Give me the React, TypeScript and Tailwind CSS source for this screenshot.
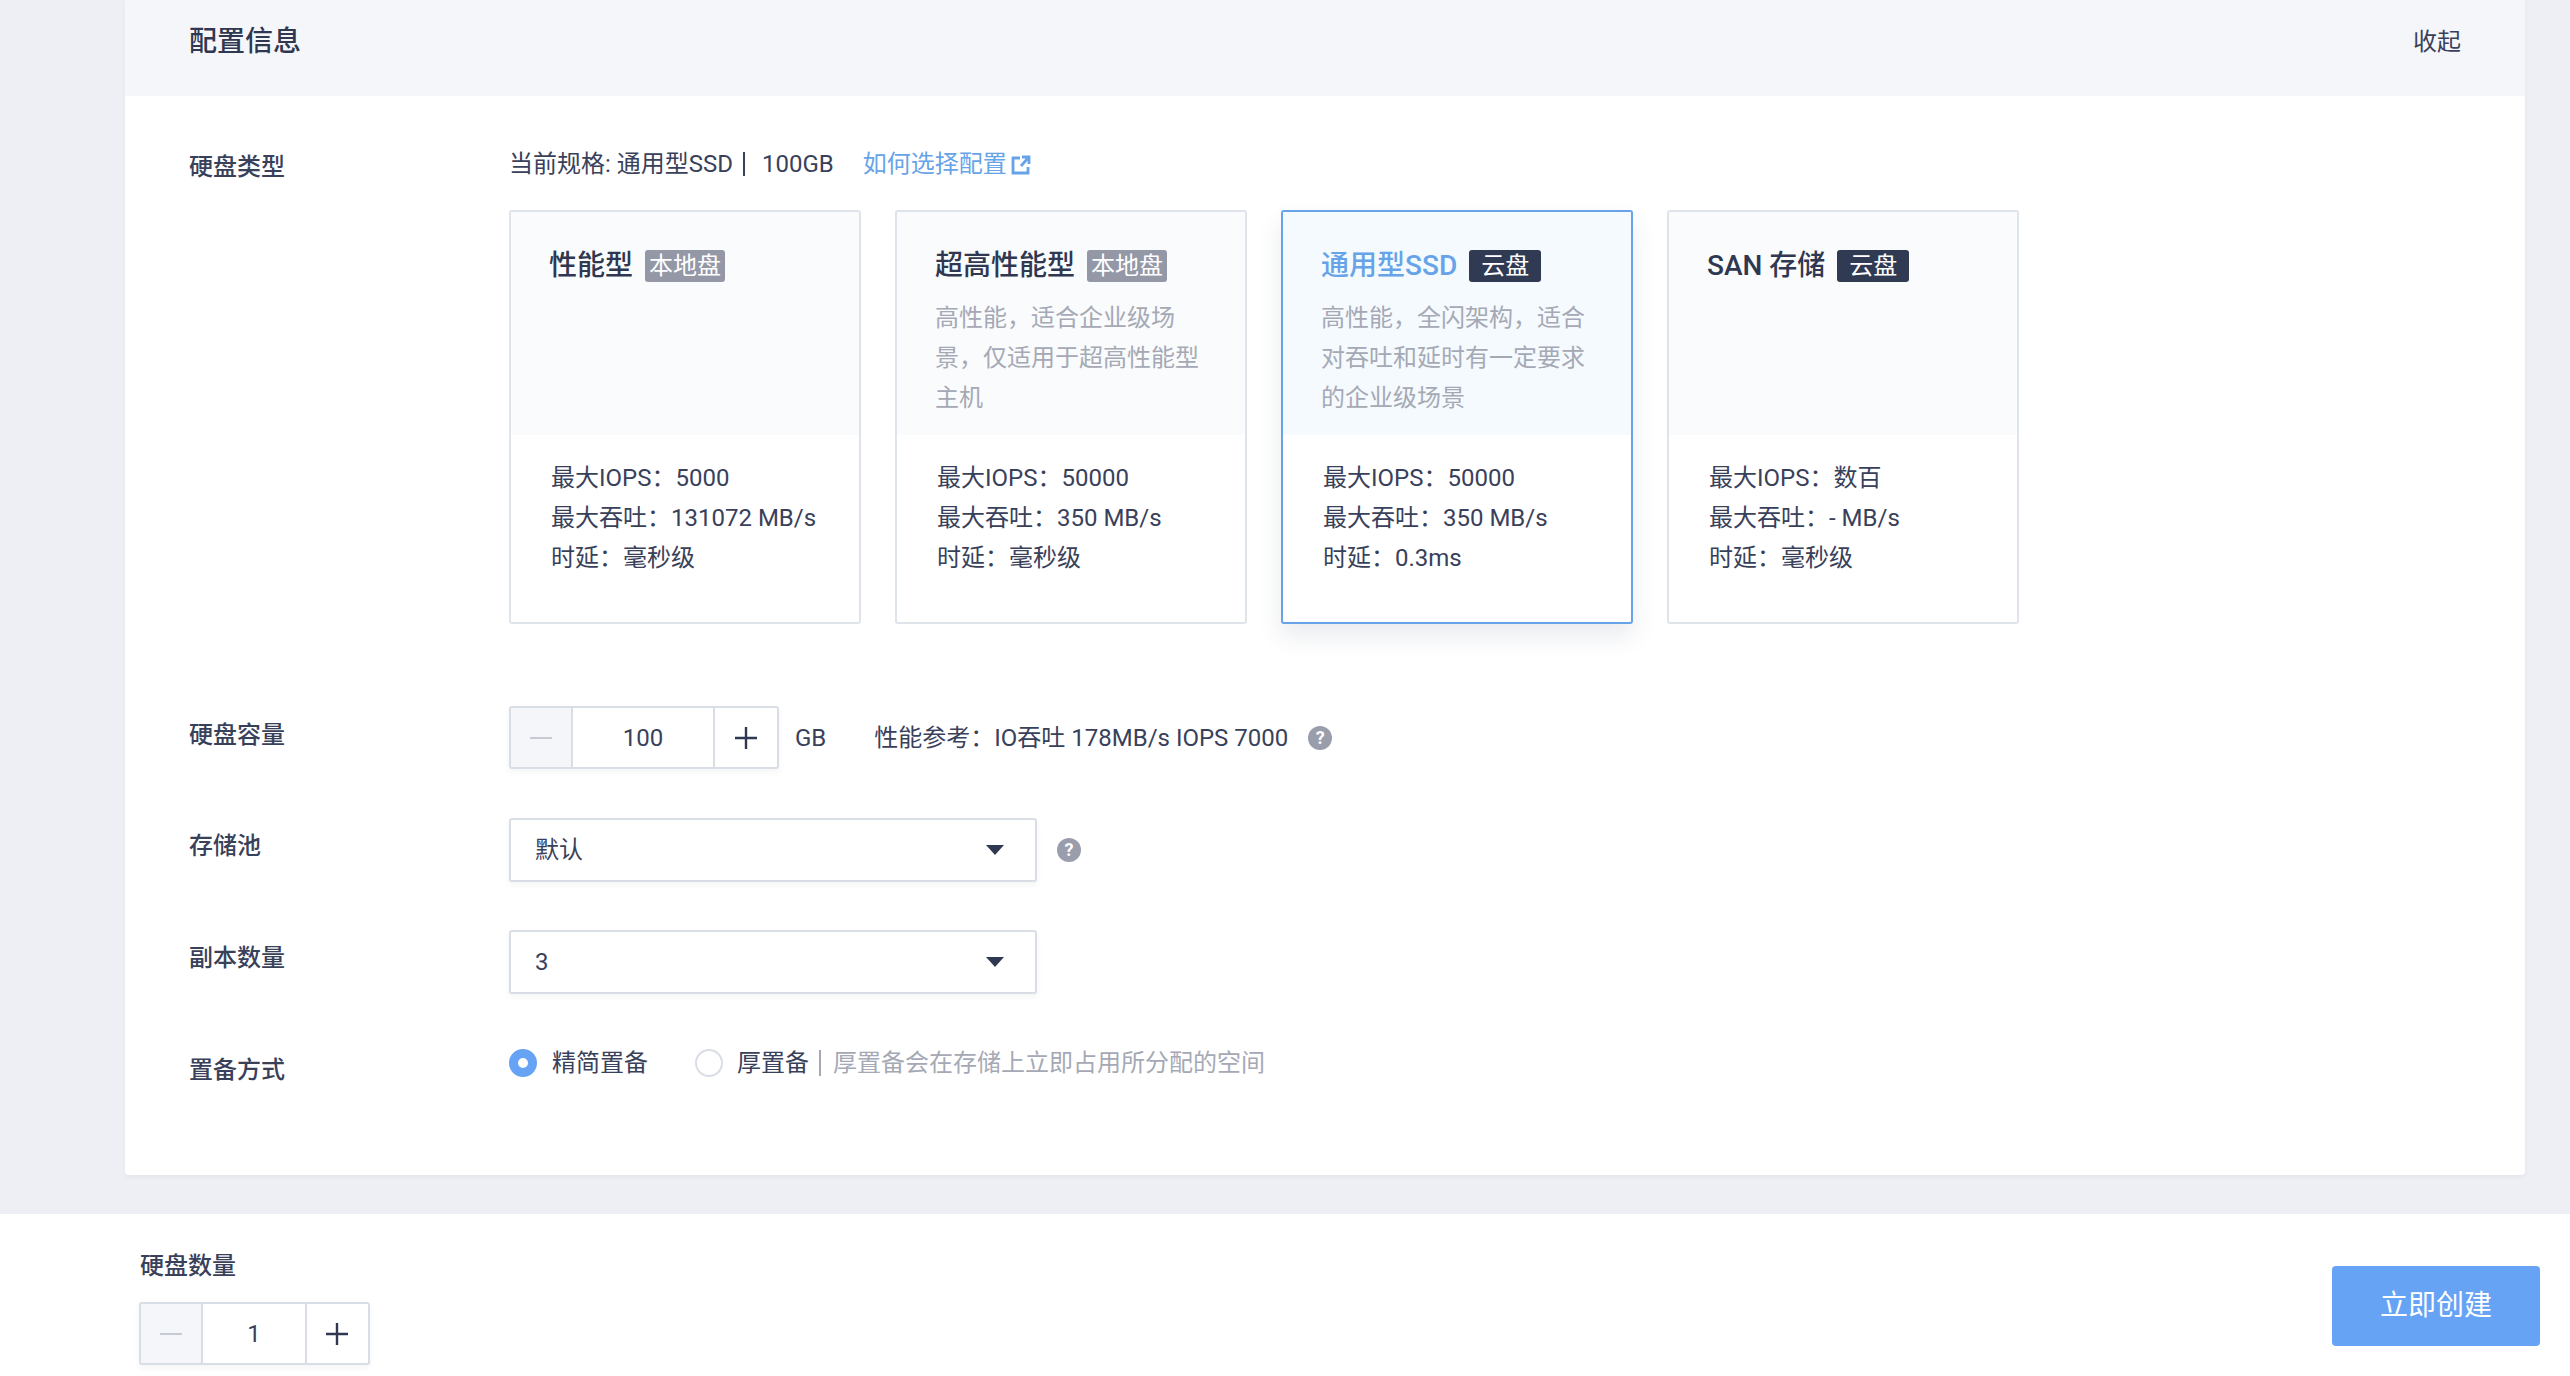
import React from "react";

const cards = [
  {
    title: "性能型",
    badge: "本地盘",
    dark: false,
    active: false,
    desc: [],
    stats: ["最大IOPS：5000", "最大吞吐：131072 MB/s", "时延：毫秒级"],
  },
  {
    title: "超高性能型",
    badge: "本地盘",
    dark: false,
    active: false,
    desc: ["高性能，适合企业级场", "景，仅适用于超高性能型", "主机"],
    stats: ["最大IOPS：50000", "最大吞吐：350 MB/s", "时延：毫秒级"],
  },
  {
    title: "通用型SSD",
    badge: "云盘",
    dark: true,
    active: true,
    desc: ["高性能，全闪架构，适合", "对吞吐和延时有一定要求", "的企业级场景"],
    stats: ["最大IOPS：50000", "最大吞吐：350 MB/s", "时延：0.3ms"],
  },
  {
    title: "SAN 存储",
    badge: "云盘",
    dark: true,
    active: false,
    desc: [],
    stats: ["最大IOPS：数百", "最大吞吐：- MB/s", "时延：毫秒级"],
  },
];

function Stepper({ value, inputWidth, plusWidth }: { value: string; inputWidth: string; plusWidth: string }) {
  return (
    <div className="flex h-[63px] rounded-[3px] border-2 border-[#d8dde6] bg-white shadow-[0_3px_6px_rgba(40,50,80,0.05)]">
      <div className="flex w-[62px] items-center justify-center border-r-2 border-[#d8dde6] bg-[#f5f6fa]">
        <div className="h-[2px] w-[22px] bg-[#c6cad3]" />
      </div>
      <div className={`flex items-center justify-center text-[24px] text-[#39415a] ${inputWidth}`}>{value}</div>
      <div className={`flex items-center justify-center border-l-2 border-[#d8dde6] ${plusWidth}`}>
        <svg width="24" height="24" viewBox="0 0 24 24" fill="none" stroke="#2f3850" strokeWidth="2.4">
          <path d="M12 1v22M1 12h22" />
        </svg>
      </div>
    </div>
  );
}

function Help() {
  return (
    <span className="flex h-[24px] w-[24px] items-center justify-center rounded-full bg-[#9a9eac] text-[18px] font-bold leading-none text-white">
      ?
    </span>
  );
}

function Select({ value }: { value: string }) {
  return (
    <div className="flex h-[64px] w-[528px] items-center justify-between rounded-[3px] border-2 border-[#d8dde6] bg-white pl-[24px] pr-[31px] text-[24px] text-[#39415a] shadow-[0_3px_6px_rgba(40,50,80,0.05)]">
      <span>{value}</span>
      <svg width="18" height="10" viewBox="0 0 18 10" fill="#2f3850">
        <path d="M0 0h18L9 10z" />
      </svg>
    </div>
  );
}

function Card({ card }: { card: (typeof cards)[number] }) {
  return (
    <div
      className={`h-[414px] w-[352px] rounded-[3px] border-2 bg-white ${
        card.active
          ? "border-[#66a3e8] shadow-[0_12px_24px_rgba(40,60,100,0.1)]"
          : "border-[#dfe3ea]"
      }`}
    >
      <div className={`h-[223px] pl-[38px] pr-[30px] pt-[38px] ${card.active ? "bg-[#f5fafe]" : "bg-[#f9fbfc]"}`}>
        <div className="flex h-[32px] items-center gap-[12px]">
          <span className={`text-[28px] font-medium ${card.active ? "text-[#66a3e8]" : "text-[#2f3850]"}`}>
            {card.title}
          </span>
          <span
            className={`flex h-[32px] items-center rounded-[3px] text-[24px] text-white ${
              card.dark ? "bg-[#303a52] px-[12px]" : "bg-[#9397a6] px-[4px]"
            }`}
          >
            {card.badge}
          </span>
        </div>
        <div className="mt-[16px] text-[24px] leading-[40px] whitespace-nowrap text-[#a5a9b5]">
          {card.desc.map((line) => (
            <div key={line}>{line}</div>
          ))}
        </div>
      </div>
      <div className="px-[40px] pt-[23px] text-[24px] leading-[40px] whitespace-nowrap text-[#39415a]">
        {card.stats.map((line) => (
          <div key={line}>{line}</div>
        ))}
      </div>
    </div>
  );
}

export default function App() {
  return (
    <div
      className="flex h-[1376px] w-[2570px] flex-col overflow-hidden bg-[#eeeff4] text-[#39415a]"
      style={{ fontFamily: 'Roboto, "Noto Sans CJK SC", sans-serif' }}
    >
      {/* Panel */}
      <div className="pl-[125px] pr-[45px]">
        <div className="h-[1175px] rounded-b-[4px] bg-white shadow-[0_2px_4px_rgba(40,50,80,0.05)]">
          <div className="flex h-[96px] items-start justify-between bg-[#f5f6fa] px-[64px] pt-[21px]">
            <span className="text-[28px] font-medium leading-[42px] text-[#2f3850]">配置信息</span>
            <span className="text-[24px] leading-[42px] text-[#39415a]">收起</span>
          </div>

          <div className="pl-[64px] pt-[48px]">
            <div className="flex">
              <div className="w-[320px] pt-[3px] text-[24px] font-medium leading-[40px] text-[#39415a]">硬盘类型</div>
              <div>
                <div className="flex h-[40px] items-center text-[24px]">
                  <span>当前规格: 通用型SSD</span>
                  <span className="ml-[10px] h-[24px] w-[2px] bg-[#39415a]" />
                  <span className="ml-[17px]">100GB</span>
                  <span className="ml-[29px] text-[#66a3e8]">如何选择配置</span>
                  <svg className="ml-[4px] mt-[2px]" width="20" height="20" viewBox="0 0 20 20" fill="none" stroke="#66a3e8" strokeWidth="2.8">
                    <path d="M9 3H2v15h15v-6M10 11l7-8M11 2h7v7" />
                  </svg>
                </div>
                <div className="mt-[26px] flex gap-[34px]">
                  {cards.map((card) => (
                    <Card key={card.title} card={card} />
                  ))}
                </div>
              </div>
            </div>

            <div className="mt-[82px] flex items-center">
              <div className="w-[320px] pb-[6px] text-[24px] font-medium text-[#39415a]">硬盘容量</div>
              <Stepper value="100" inputWidth="w-[140px]" plusWidth="w-[64px]" />
              <span className="ml-[16px] text-[24px]">GB</span>
              <span className="ml-[48px] text-[24px]">性能参考：IO吞吐 178MB/s IOPS 7000</span>
              <span className="ml-[20px]">
                <Help />
              </span>
            </div>

            <div className="mt-[49px] flex items-center">
              <div className="w-[320px] pb-[8px] text-[24px] font-medium text-[#39415a]">存储池</div>
              <Select value="默认" />
              <span className="ml-[20px]">
                <Help />
              </span>
            </div>

            <div className="mt-[48px] flex items-center">
              <div className="w-[320px] pb-[8px] text-[24px] font-medium text-[#39415a]">副本数量</div>
              <Select value="3" />
            </div>

            <div className="mt-[49px] flex">
              <div className="w-[320px] pt-[7px] text-[24px] font-medium leading-[40px] text-[#39415a]">置备方式</div>
              <div className="flex h-[40px] items-center text-[24px]">
                <span className="box-border h-[28px] w-[28px] rounded-full border-[9px] border-[#66a3f5] bg-white" />
                <span className="ml-[15px]">精简置备</span>
                <span className="ml-[47px] h-[28px] w-[28px] rounded-full border-2 border-[#d8dde6] bg-white" />
                <span className="ml-[14px]">厚置备</span>
                <span className="ml-[10px] h-[26px] w-[2px] bg-[#a5a9b5]" />
                <span className="ml-[12px] text-[#a5a9b5]">厚置备会在存储上立即占用所分配的空间</span>
              </div>
            </div>
          </div>
        </div>
      </div>

      {/* Footer */}
      <div className="mt-[39px] flex h-[162px] items-start justify-between bg-white pl-[139px] pr-[30px]">
        <div className="pt-[34px]">
          <div className="pl-[1px] text-[24px] font-medium leading-[36px] text-[#39415a]">硬盘数量</div>
          <div className="mt-[18px] w-[231px]">
            <Stepper value="1" inputWidth="w-[102px]" plusWidth="w-[62px]" />
          </div>
        </div>
        <div className="mt-[52px] flex h-[80px] w-[208px] items-center justify-center rounded-[4px] bg-[#66a3f5] text-[28px] text-white">
          立即创建
        </div>
      </div>
    </div>
  );
}
